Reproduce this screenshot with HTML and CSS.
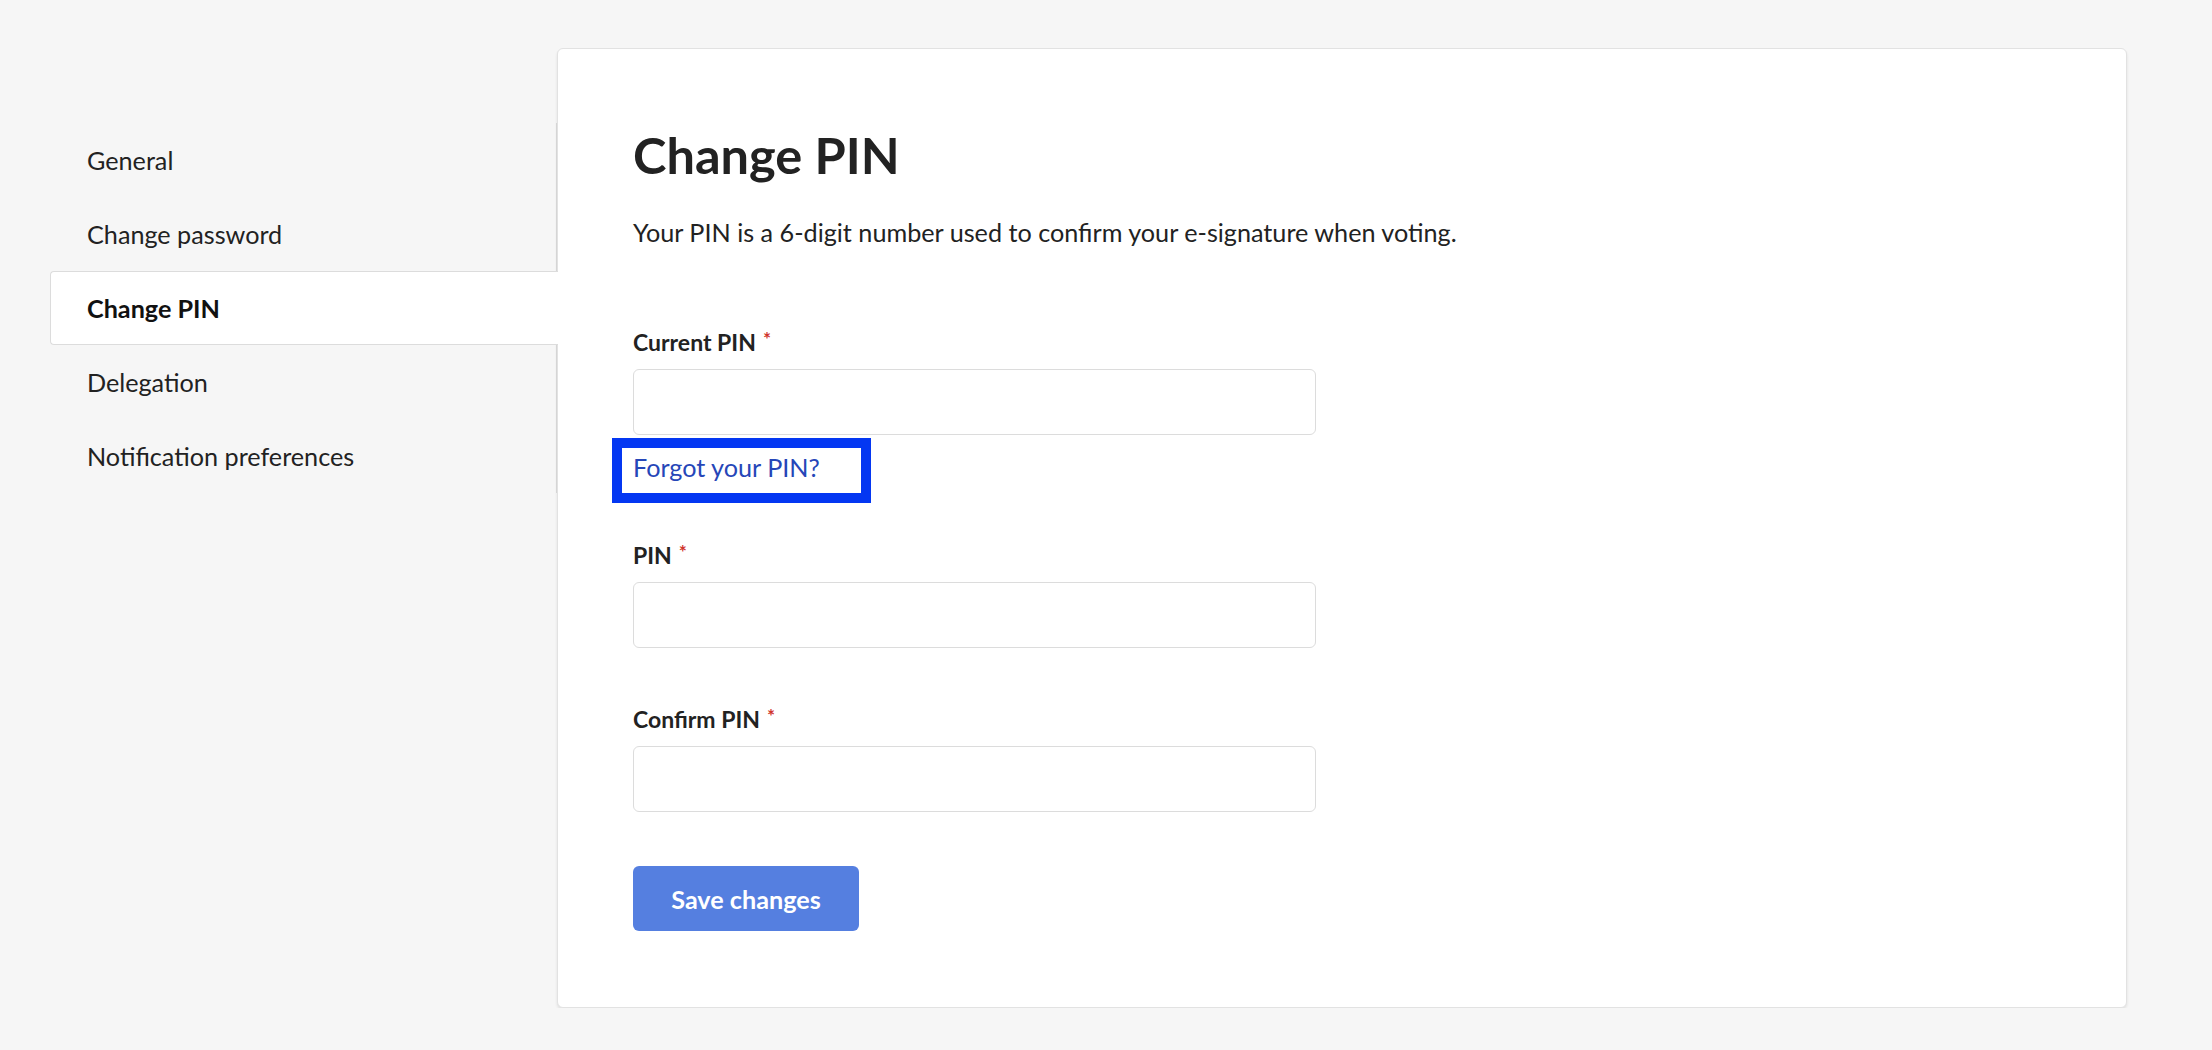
FILE: index.html
```html
<!DOCTYPE html>
<html lang="en">
<head>
<meta charset="utf-8">
<title>Change PIN</title>
<link rel="stylesheet" href="styles.css">
</head>
<body>
<div class="page">
  <nav class="sidebar">
    <a class="nav-item" href="#">General</a>
    <a class="nav-item" href="#">Change password</a>
    <a class="nav-item active" href="#">Change PIN</a>
    <a class="nav-item" href="#">Delegation</a>
    <a class="nav-item" href="#">Notification preferences</a>
  </nav>
  <main class="card">
    <h1 class="title">Change PIN</h1>
    <p class="desc">Your PIN is a 6-digit number used to confirm your e-signature when voting.</p>
    <form class="form">
      <div class="field first">
        <label class="label">Current PIN<span class="req">*</span></label>
        <input class="input" type="password">
      </div>
      <a class="forgot" href="#">Forgot your PIN?</a>
      <div class="field second">
        <label class="label">PIN<span class="req">*</span></label>
        <input class="input" type="password">
      </div>
      <div class="field third">
        <label class="label">Confirm PIN<span class="req">*</span></label>
        <input class="input" type="password">
      </div>
      <button class="save" type="button">Save changes</button>
    </form>
  </main>
</div>
</body>
</html>
```
FILE: styles.css
```css
html, body {
  margin: 0;
  padding: 0;
  background: #f6f6f6;
}

body {
  font-family: Lato, "Noto Sans", "Liberation Sans", sans-serif;
  font-size: 25.2px;
  color: #222;
}

.page {
  display: flex;
  align-items: flex-start;
  padding: 48px 0 0 50px;
}

.sidebar {
  width: 506px;
  margin-top: 75px;
  display: flex;
  flex-direction: column;
  border-right: 1px solid #dcdcdc;
}

.nav-item {
  display: flex;
  align-items: center;
  height: 74px;
  box-sizing: border-box;
  padding-left: 37px;
  color: #222;
  text-decoration: none;
}

.nav-item.active {
  position: relative;
  z-index: 1;
  background: #fff;
  border: 1px solid #dcdcdc;
  border-right: none;
  border-radius: 4px 0 0 4px;
  padding-left: 36px;
  margin-right: -2px;
  font-weight: 700;
  color: #111;
}

.card {
  width: 1570px;
  box-sizing: border-box;
  background: #fff;
  border: 1px solid #e2e2e2;
  border-radius: 6px;
  box-shadow: 0 2px 3px rgba(0, 0, 0, 0.09);
  padding: 75px 75px 76px;
}

.title {
  margin: 0;
  font-size: 50.5px;
  line-height: 61px;
  font-weight: 700;
  color: #222;
}

.desc {
  margin: 28px 0 0;
  line-height: 38px;
}

.form {
  display: flex;
  flex-direction: column;
  align-items: flex-start;
}

.field {
  display: flex;
  flex-direction: column;
}

.field.first { margin-top: 72px; }
.field.second { margin-top: 43px; }
.field.third { margin-top: 52px; }

.label {
  font-size: 23px;
  font-weight: 700;
  line-height: 38px;
  margin-bottom: 8px;
  color: #222;
}

.req {
  color: #d0342c;
  font-size: 19px;
  line-height: 0;
  margin-left: 7px;
  vertical-align: 5px;
}

.input {
  width: 683px;
  height: 66px;
  box-sizing: border-box;
  border: 1px solid #dcdcdc;
  border-radius: 6px;
  background: #fff;
  font: inherit;
  outline: none;
}

.forgot {
  display: inline-block;
  margin: 13px 0 0 -11px;
  padding: 0 41px 7px 11px;
  line-height: 38px;
  color: #2646b8;
  text-decoration: none;
  outline: 10px solid #0437f2;
}

.save {
  margin-top: 54px;
  width: 226px;
  height: 65px;
  border: none;
  border-radius: 6px;
  background: #557fe0;
  color: #fff;
  font: inherit;
  font-weight: 700;
  padding: 0;
}
```
